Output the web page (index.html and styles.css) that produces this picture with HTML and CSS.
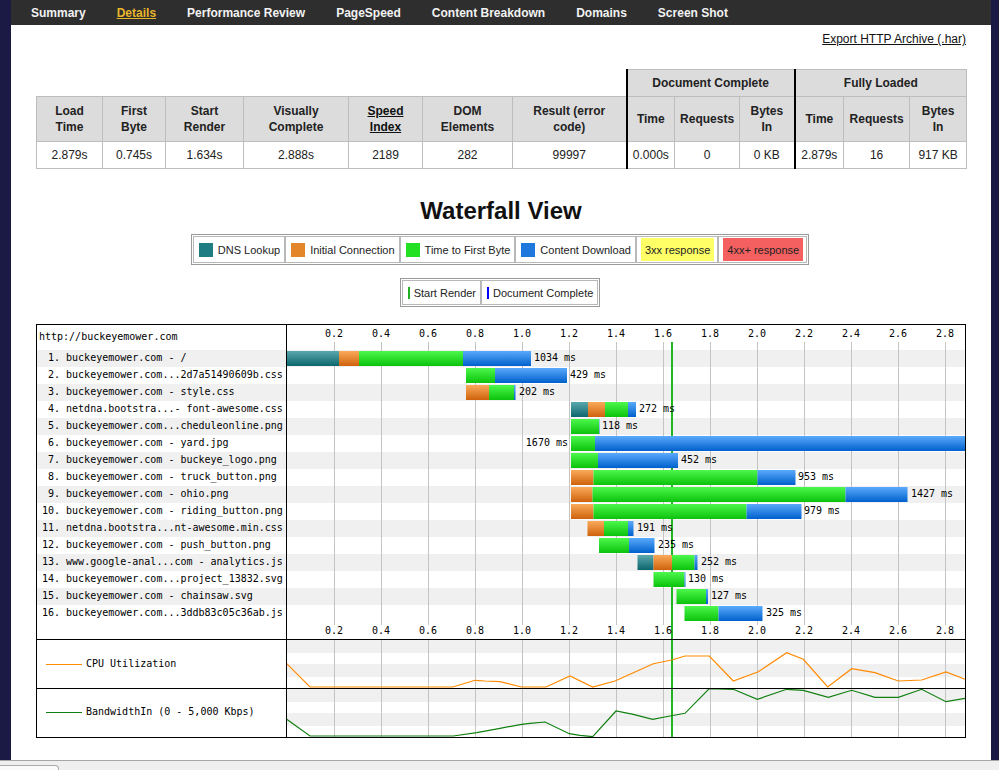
FILE: index.html
```html
<!DOCTYPE html>
<html>
<head>
<meta charset="utf-8">
<title>Details</title>
<link rel="stylesheet" href="styles.css">
</head>
<body>
<div class="frame">
  <div class="page">
    <nav class="nav">
      <a href="#">Summary</a>
      <a href="#" class="active">Details</a>
      <a href="#">Performance Review</a>
      <a href="#">PageSpeed</a>
      <a href="#">Content Breakdown</a>
      <a href="#">Domains</a>
      <a href="#">Screen Shot</a>
    </nav>
    <div class="export"><a href="#">Export HTTP Archive (.har)</a></div>

    <table class="summary">
      <colgroup>
        <col style="width:66px"><col style="width:63px"><col style="width:78px"><col style="width:105px"><col style="width:74px"><col style="width:90px"><col style="width:114px"><col style="width:48px"><col style="width:65px"><col style="width:55px"><col style="width:49px"><col style="width:66px"><col style="width:57px">
      </colgroup>
      <tr class="r1">
        <td class="blank" colspan="7"></td>
        <th class="sep" colspan="3">Document Complete</th>
        <th class="sep" colspan="3">Fully Loaded</th>
      </tr>
      <tr class="r2">
        <th>Load<br>Time</th>
        <th>First<br>Byte</th>
        <th>Start<br>Render</th>
        <th>Visually<br>Complete</th>
        <th><a href="#" class="hlink">Speed<br>Index</a></th>
        <th>DOM<br>Elements</th>
        <th>Result (error<br>code)</th>
        <th class="sep">Time</th>
        <th>Requests</th>
        <th>Bytes<br>In</th>
        <th class="sep">Time</th>
        <th>Requests</th>
        <th>Bytes<br>In</th>
      </tr>
      <tr class="r3">
        <td>2.879s</td>
        <td>0.745s</td>
        <td>1.634s</td>
        <td>2.888s</td>
        <td>2189</td>
        <td>282</td>
        <td>99997</td>
        <td class="sep">0.000s</td>
        <td>0</td>
        <td>0 KB</td>
        <td class="sep">2.879s</td>
        <td>16</td>
        <td>917 KB</td>
      </tr>
    </table>

    <h2 class="wf-title">Waterfall View</h2>

    <div class="legend-row">
      <div class="legend">
        <div class="lg-cell"><span class="sw sw-dns"></span>DNS Lookup</div>
        <div class="lg-cell"><span class="sw sw-conn"></span>Initial Connection</div>
        <div class="lg-cell"><span class="sw sw-ttfb"></span>Time to First Byte</div>
        <div class="lg-cell"><span class="sw sw-dl"></span>Content Download</div>
        <div class="lg-cell"><span class="resp r3xx">3xx response</span></div>
        <div class="lg-cell"><span class="resp r4xx">4xx+ response</span></div>
      </div>
    </div>

    <div class="legend-row second">
      <div class="legend legend2">
        <div class="lg-cell"><span class="mark mark-render"></span>Start Render</div>
        <div class="lg-cell"><span class="mark mark-doc"></span>Document Complete</div>
      </div>
    </div>

    <svg class="wf" width="930" height="414" viewBox="0 0 930 414">
      <defs>
        <linearGradient id="gdns" x1="0" y1="0" x2="0" y2="1"><stop offset="0" stop-color="#5aa8ad"/><stop offset="1" stop-color="#0d666d"/></linearGradient>
        <linearGradient id="gconn" x1="0" y1="0" x2="0" y2="1"><stop offset="0" stop-color="#faaa5a"/><stop offset="1" stop-color="#cf620c"/></linearGradient>
        <linearGradient id="gttfb" x1="0" y1="0" x2="0" y2="1"><stop offset="0" stop-color="#4cf84c"/><stop offset="1" stop-color="#0cc20c"/></linearGradient>
        <linearGradient id="gdl" x1="0" y1="0" x2="0" y2="1"><stop offset="0" stop-color="#5aaafc"/><stop offset="1" stop-color="#0060cc"/></linearGradient>
      </defs>
      <rect x="0" y="0" width="930" height="414" fill="#fff"/>
      <g fill="#f0f0f0">
        <rect x="1" y="26" width="928" height="17"/>
        <rect x="1" y="60" width="928" height="17"/>
        <rect x="1" y="94" width="928" height="17"/>
        <rect x="1" y="128" width="928" height="17"/>
        <rect x="1" y="162" width="928" height="17"/>
        <rect x="1" y="196" width="928" height="17"/>
        <rect x="1" y="230" width="928" height="17"/>
        <rect x="1" y="264" width="928" height="17"/>
        <rect x="251" y="315" width="678" height="14"/>
        <rect x="251" y="340" width="678" height="13"/>
        <rect x="251" y="365" width="678" height="13"/>
        <rect x="251" y="389" width="678" height="13"/>
      </g>
      <g stroke="#c4c4c4" stroke-width="1">
        <path d="M298.5 18V301M345.5 18V301M392.5 18V301M439.5 18V301M486.5 18V301M533.5 18V301M580.5 18V301M627.5 18V301M674.5 18V301M721.5 18V301M768.5 18V301M815.5 18V301M862.5 18V301M909.5 18V301"/>
        <path d="M298.5 315V413M345.5 315V413M392.5 315V413M439.5 315V413M486.5 315V413M533.5 315V413M580.5 315V413M627.5 315V413M674.5 315V413M721.5 315V413M768.5 315V413M815.5 315V413M862.5 315V413M909.5 315V413"/>
      </g>
      <rect x="635" y="18" width="2" height="395" fill="#22b422"/>
      <g class="ax">
        <text x="298" y="13">0.2</text><text x="345" y="13">0.4</text><text x="392" y="13">0.6</text><text x="439" y="13">0.8</text><text x="486" y="13">1.0</text><text x="533" y="13">1.2</text><text x="580" y="13">1.4</text><text x="627" y="13">1.6</text><text x="674" y="13">1.8</text><text x="721" y="13">2.0</text><text x="768" y="13">2.2</text><text x="815" y="13">2.4</text><text x="862" y="13">2.6</text><text x="909" y="13">2.8</text>
        <text x="298" y="310">0.2</text><text x="345" y="310">0.4</text><text x="392" y="310">0.6</text><text x="439" y="310">0.8</text><text x="486" y="310">1.0</text><text x="533" y="310">1.2</text><text x="580" y="310">1.4</text><text x="627" y="310">1.6</text><text x="674" y="310">1.8</text><text x="721" y="310">2.0</text><text x="768" y="310">2.2</text><text x="815" y="310">2.4</text><text x="862" y="310">2.6</text><text x="909" y="310">2.8</text>
      </g>
      <g class="lbl">
        <text x="3" y="16">http://buckeyemower.com</text>
        <text x="12" y="36.5">1. buckeyemower.com - /</text>
        <text x="12" y="53.5">2. buckeyemower.com...2d7a51490609b.css</text>
        <text x="12" y="70.5">3. buckeyemower.com - style.css</text>
        <text x="12" y="87.5">4. netdna.bootstra...- font-awesome.css</text>
        <text x="12" y="104.5">5. buckeyemower.com...cheduleonline.png</text>
        <text x="12" y="121.5">6. buckeyemower.com - yard.jpg</text>
        <text x="12" y="138.5">7. buckeyemower.com - buckeye_logo.png</text>
        <text x="12" y="155.5">8. buckeyemower.com - truck_button.png</text>
        <text x="12" y="172.5">9. buckeyemower.com - ohio.png</text>
        <text x="6" y="189.5">10. buckeyemower.com - riding_button.png</text>
        <text x="6" y="206.5">11. netdna.bootstra...nt-awesome.min.css</text>
        <text x="6" y="223.5">12. buckeyemower.com - push_button.png</text>
        <text x="6" y="240.5">13. www.google-anal...com - analytics.js</text>
        <text x="6" y="257.5">14. buckeyemower.com...project_13832.svg</text>
        <text x="6" y="274.5">15. buckeyemower.com - chainsaw.svg</text>
        <text x="6" y="291.5">16. buckeyemower.com...3ddb83c05c36ab.js</text>
        <text x="50" y="343">CPU Utilization</text>
        <text x="50" y="391">BandwidthIn (0 - 5,000 Kbps)</text>
        <text x="498" y="36.5">1034 ms</text>
        <text x="534" y="53.5">429 ms</text>
        <text x="483" y="70.5">202 ms</text>
        <text x="603" y="87.5">272 ms</text>
        <text x="566" y="104.5">118 ms</text>
        <text x="532" y="121.5" text-anchor="end">1670 ms</text>
        <text x="645" y="138.5">452 ms</text>
        <text x="762" y="155.5">953 ms</text>
        <text x="875" y="172.5">1427 ms</text>
        <text x="768" y="189.5">979 ms</text>
        <text x="601" y="206.5">191 ms</text>
        <text x="622" y="223.5">235 ms</text>
        <text x="665" y="240.5">252 ms</text>
        <text x="652" y="257.5">130 ms</text>
        <text x="675" y="274.5">127 ms</text>
        <text x="730" y="291.5">325 ms</text>
      </g>
      <g>
        <rect x="251" y="27" width="52" height="15" fill="url(#gdns)"/>
        <rect x="303" y="27" width="20" height="15" fill="url(#gconn)"/>
        <rect x="323" y="27" width="104" height="15" fill="url(#gttfb)"/>
        <rect x="427" y="27" width="68" height="15" fill="url(#gdl)"/>

        <rect x="430" y="44" width="29" height="15" fill="url(#gttfb)"/>
        <rect x="459" y="44" width="72" height="15" fill="url(#gdl)"/>

        <rect x="430" y="61" width="23" height="15" fill="url(#gconn)"/>
        <rect x="453" y="61" width="25" height="15" fill="url(#gttfb)"/>
        <rect x="478" y="61" width="1.5" height="15" fill="url(#gdl)"/>

        <rect x="535" y="78" width="17" height="15" fill="url(#gdns)"/>
        <rect x="552" y="78" width="17" height="15" fill="url(#gconn)"/>
        <rect x="569" y="78" width="23" height="15" fill="url(#gttfb)"/>
        <rect x="592" y="78" width="8" height="15" fill="url(#gdl)"/>

        <rect x="535" y="95" width="28" height="15" fill="url(#gttfb)"/>
        <rect x="563" y="95" width="0.5" height="15" fill="url(#gdl)"/>

        <rect x="535" y="112" width="24" height="15" fill="url(#gttfb)"/>
        <rect x="559" y="112" width="370" height="15" fill="url(#gdl)"/>

        <rect x="535" y="129" width="27" height="15" fill="url(#gttfb)"/>
        <rect x="562" y="129" width="80" height="15" fill="url(#gdl)"/>

        <rect x="535" y="146" width="22.5" height="15" fill="url(#gconn)"/>
        <rect x="557.5" y="146" width="164" height="15" fill="url(#gttfb)"/>
        <rect x="721.5" y="146" width="38" height="15" fill="url(#gdl)"/>

        <rect x="535" y="163" width="21.5" height="15" fill="url(#gconn)"/>
        <rect x="556.5" y="163" width="253" height="15" fill="url(#gttfb)"/>
        <rect x="809.5" y="163" width="62" height="15" fill="url(#gdl)"/>

        <rect x="535" y="180" width="22.5" height="15" fill="url(#gconn)"/>
        <rect x="557.5" y="180" width="153" height="15" fill="url(#gttfb)"/>
        <rect x="710.5" y="180" width="55" height="15" fill="url(#gdl)"/>

        <rect x="551.5" y="197" width="16.5" height="15" fill="url(#gconn)"/>
        <rect x="568" y="197" width="24" height="15" fill="url(#gttfb)"/>
        <rect x="592" y="197" width="5.5" height="15" fill="url(#gdl)"/>

        <rect x="563" y="214" width="30" height="15" fill="url(#gttfb)"/>
        <rect x="593" y="214" width="25.5" height="15" fill="url(#gdl)"/>

        <rect x="601.5" y="231" width="16" height="15" fill="url(#gdns)"/>
        <rect x="617.5" y="231" width="18.5" height="15" fill="url(#gconn)"/>
        <rect x="636" y="231" width="22.5" height="15" fill="url(#gttfb)"/>
        <rect x="658.5" y="231" width="3" height="15" fill="url(#gdl)"/>

        <rect x="617.5" y="248" width="31" height="15" fill="url(#gttfb)"/>
        <rect x="648.5" y="248" width="1" height="15" fill="url(#gdl)"/>

        <rect x="640.5" y="265" width="29.5" height="15" fill="url(#gttfb)"/>
        <rect x="670" y="265" width="2" height="15" fill="url(#gdl)"/>

        <rect x="648.5" y="282" width="34" height="15" fill="url(#gttfb)"/>
        <rect x="682.5" y="282" width="44" height="15" fill="url(#gdl)"/>
      </g>
      <line x1="10" y1="340.5" x2="46" y2="340.5" stroke="#ff8a00" stroke-width="1"/>
      <line x1="10" y1="388.5" x2="46" y2="388.5" stroke="#108010" stroke-width="1"/>
      <polyline fill="none" stroke="#ff8a00" stroke-width="1.2" points="250.7,339.7 274,363 416.7,363 439,356.3 449,357 464,357.7 485.7,363 510,363 534,352 556.7,363 579,357 597.3,348.7 617.3,339.7 635.7,336 649,332 673.3,332 697.3,357 722.3,347.7 750.7,328.7 767.3,335.3 791.7,363 815.7,344.7 839,348.7 862.3,357 885.7,356 910,348 929,355.3"/>
      <polyline fill="none" stroke="#108010" stroke-width="1.2" points="250.7,395.3 274,412 417.3,412 440.7,408.7 464,404.3 485.7,400.3 494,399.3 509,398 533.3,409.7 544,411.3 556.7,412.7 580,387 597.3,390.3 616.7,395.3 634,392 649,389.3 673.3,364.7 697.3,365.3 721.3,375.3 750.7,365.3 767.3,366.3 792.3,373.3 815.7,366.3 839,373.3 862.3,373.3 885.7,365.3 910,377.7 929,374.3"/>
      <g stroke="#000" stroke-width="1" fill="none">
        <rect x="0.5" y="0.5" width="929" height="413"/>
        <path d="M250.5 0V414M0 315.5H930M0 364.5H930"/>
      </g>
    </svg>
  </div>
</div>
<div class="statusbar"><div class="tab"></div></div>
</body>
</html>
```

FILE: styles.css
```css
html, body {
  margin: 0;
  padding: 0;
  height: 770px;
  overflow: hidden;
}
body {
  background: #1b1a45;
  font-family: "Liberation Sans", Arial, sans-serif;
}
.frame {
  height: 760px;
  padding: 0 8px 0 11px;
  box-sizing: border-box;
}
.page {
  background: #fff;
  height: 760px;
  padding: 0 25px;
  box-sizing: border-box;
  overflow: hidden;
}
.nav {
  display: flex;
  gap: 31px;
  height: 25px;
  align-items: center;
  background: #2e2e2e;
  margin: 0 -25px;
  padding: 0 0 0 20px;
}
.nav a {
  color: #f2f2f2;
  font-weight: bold;
  font-size: 12px;
  text-decoration: none;
  line-height: 14px;
}
.nav a.active {
  color: #e8b52a;
  text-decoration: underline;
}
.export {
  text-align: right;
  margin-top: 7px;
  font-size: 12px;
  line-height: 14px;
}
.export a {
  color: #111;
  text-decoration: underline;
}
.summary {
  margin-top: 23px;
  width: 930px;
  table-layout: fixed;
  border-collapse: collapse;
  font-size: 12px;
  color: #222;
}
.summary th,
.summary td {
  border: 1px solid #bdbdbd;
  text-align: center;
  padding: 0 2px;
  line-height: 16px;
}
.summary th {
  background: #dcdcdc;
  font-weight: bold;
}
.summary .r1 th { height: 26px; }
.summary .r2 th { height: 44px; }
.summary .r3 td { height: 26px; }
.summary td.blank {
  border: none;
  border-bottom: 1px solid #bdbdbd;
  background: #fff;
}
.summary .sep {
  border-left: 2px solid #000;
}
.hlink {
  color: #111;
  text-decoration: underline;
}
.wf-title {
  margin: 28px 0 0;
  text-align: center;
  font-size: 24px;
  line-height: 28px;
  font-weight: bold;
  color: #111;
}
.legend-row {
  display: flex;
  justify-content: center;
  margin-top: 9px;
  padding-right: 2px;
}
.legend-row.second {
  margin-top: 13px;
}
.legend {
  display: flex;
  border: 1px solid #9a9a9a;
  padding: 1px;
  height: 31px;
  box-sizing: border-box;
  font-size: 11px;
  color: #222;
}
.legend2 {
  height: 29px;
}
.lg-cell {
  display: flex;
  align-items: center;
  padding: 0 4px 0 5px;
  border: 1px solid #b8b8b8;
}
.sw {
  width: 14px;
  height: 14px;
  margin-right: 5px;
}
.sw-dns { background: #1f7c83; }
.sw-conn { background: #e3862a; }
.sw-ttfb { background: #22e022; }
.sw-dl { background: #1e78de; }
.resp {
  display: flex;
  align-items: center;
  height: 23px;
  padding: 0 4px;
  margin: 0 -1px 0 -1px;
}
.r3xx { background: #ffff66; }
.r4xx { background: #f46060; }
.mark {
  width: 2px;
  height: 12px;
  margin-right: 4px;
}
.mark-render { background: #20b020; }
.mark-doc { background: #0000ff; }
.wf {
  display: block;
  margin-top: 17px;
}
.wf text {
  font-family: "DejaVu Sans Mono", monospace;
  font-size: 10px;
  fill: #000;
}
.wf .ax text {
  text-anchor: middle;
}
.statusbar {
  height: 10px;
  background: #efefef;
  border-top: 1px solid #a6a6a6;
  box-sizing: border-box;
  padding-top: 4px;
}
.tab {
  width: 58px;
  height: 6px;
  background: #fafafa;
  border: 1px solid #aaa;
  border-bottom: none;
  border-left: none;
  border-radius: 0 4px 0 0;
}
```
